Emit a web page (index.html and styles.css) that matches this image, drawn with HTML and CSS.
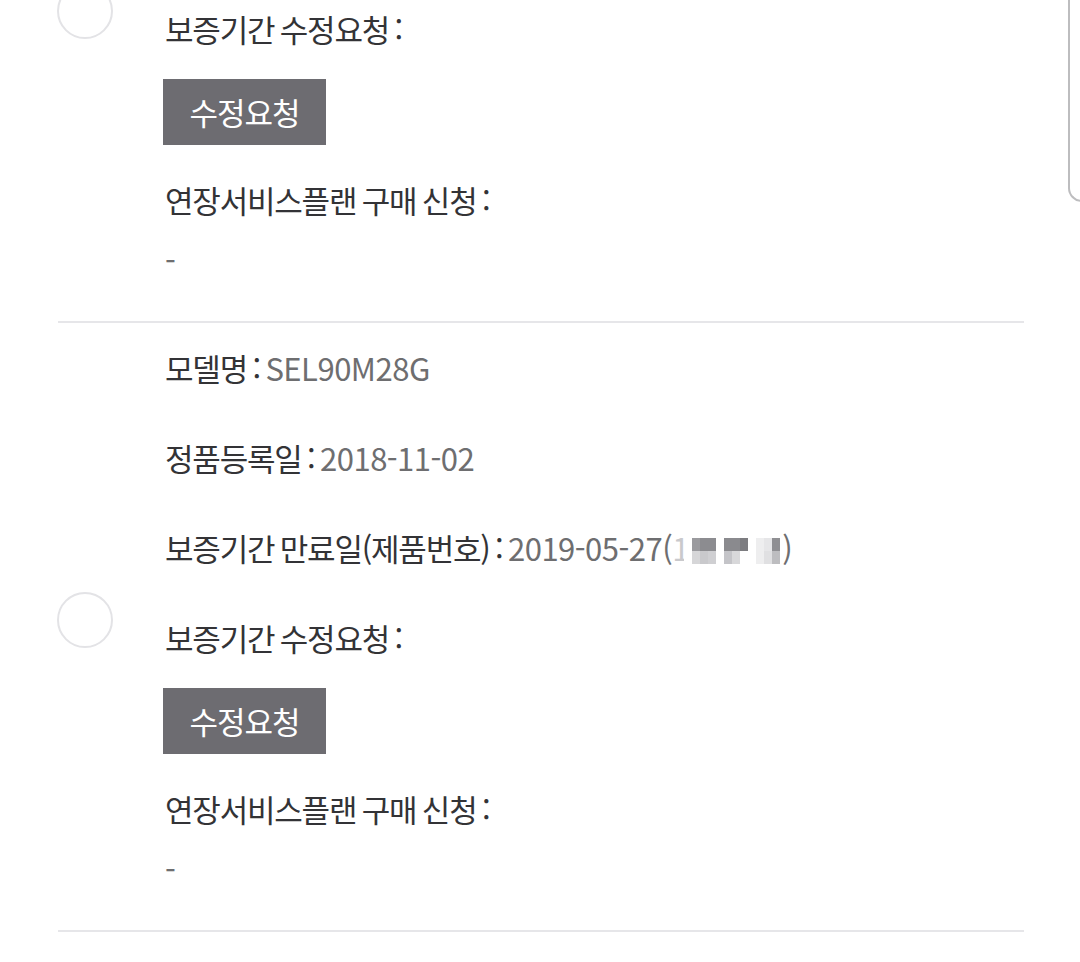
FILE: index.html
```html
<!DOCTYPE html>
<html lang="ko">
<head>
<meta charset="utf-8">
<title>정품등록 목록</title>
<link rel="stylesheet" href="styles.css">
</head>
<body>
<div class="page">
  <ul class="list">
    <li class="item">
      <span class="radio"></span>
      <div class="fields">
        <p class="row"><span class="label">모델명 : </span><span class="value">SEL90M28G</span></p>
        <p class="row"><span class="label">정품등록일 : </span><span class="value">2018-11-02</span></p>
        <p class="row"><span class="label">보증기간 만료일(제품번호) : </span><span class="value">2019-05-27(1)</span></p>
        <p class="row"><span class="label">보증기간 수정요청 :</span></p>
        <div class="btn-row"><button class="btn" type="button">수정요청</button></div>
        <p class="row after-btn"><span class="label">연장서비스플랜 구매 신청 :</span></p>
        <p class="row dash"><span class="value">-</span></p>
      </div>
    </li>
    <li class="item">
      <span class="radio"></span>
      <div class="fields">
        <p class="row"><span class="label">모델명 : </span><span class="value">SEL90M28G</span></p>
        <p class="row"><span class="label">정품등록일 : </span><span class="value">2018-11-02</span></p>
        <p class="row"><span class="label">보증기간 만료일(제품번호) : </span><span class="value">2019-05-27(<span class="faint">1</span><span class="mosaic"><i></i><i class="a"></i><i class="b"></i><i class="c"></i><i></i><i class="d"></i><i class="e"></i><i class="f"></i><i></i><i class="g"></i><i class="h"></i><i class="k"></i></span>)</span></p>
        <p class="row"><span class="label">보증기간 수정요청 :</span></p>
        <div class="btn-row"><button class="btn" type="button">수정요청</button></div>
        <p class="row after-btn"><span class="label">연장서비스플랜 구매 신청 :</span></p>
        <p class="row dash"><span class="value">-</span></p>
      </div>
    </li>
  </ul>
  <div class="scroll-thumb"></div>
</div>
</body>
</html>
```

FILE: styles.css
```css
html, body {
  margin: 0;
  padding: 0;
  background: #ffffff;
}

body {
  font-family: "Noto Sans CJK KR", "Noto Sans", sans-serif;
  overflow: hidden;
}

.page {
  position: relative;
  width: 1080px;
  height: 962px;
  overflow: hidden;
}

.list {
  list-style: none;
  margin: -286px 0 0 58px;
  padding: 0;
  width: 966px;
}

.item {
  display: grid;
  grid-template-columns: 107px 1fr;
  align-items: center;
  padding: 25px 0 41px;
  border-bottom: 2px solid #e6e6e9;
}

.radio {
  width: 56px;
  height: 56px;
  box-sizing: border-box;
  border: 2px solid #e3e3e6;
  border-radius: 50%;
  margin-left: -1px;
  margin-top: 3px;
}

.fields {
  display: flex;
  flex-direction: column;
  align-items: flex-start;
}

.row {
  margin: 50px 0 0;
  height: 40px;
  line-height: 40px;
  font-size: 31px;
  white-space: nowrap;
}

.row:first-child {
  margin-top: 0;
}

.label {
  color: #333336;
  letter-spacing: -1.2px;
  word-spacing: -2px;
}

.value {
  color: #6e6e70;
  letter-spacing: -0.5px;
}

.btn-row {
  margin-top: 30px;
  margin-left: -2px;
}

.btn {
  display: block;
  width: 163px;
  height: 66px;
  margin: 0;
  padding: 0;
  border: 0;
  border-radius: 0;
  background: #6d6c71;
  color: #ffffff;
  font-family: "Noto Sans CJK KR", "Noto Sans", sans-serif;
  font-size: 31px;
  letter-spacing: -1px;
  line-height: 66px;
}

.row.after-btn {
  margin-top: 35px;
}

.row.dash {
  margin-top: 20px;
}

.faint {
  color: #c9c9cc;
  display: inline-block;
  width: 12px;
  overflow: hidden;
  vertical-align: top;
}

.mosaic {
  display: inline-grid;
  grid-template-columns: repeat(12, 8px);
  grid-template-rows: 13px 13px;
  grid-auto-flow: column;
  vertical-align: -3px;
  margin-right: 2px;
}

.mosaic i {
  grid-row: span 2;
  display: block;
  background: transparent;
}

.mosaic i.a { background: linear-gradient(#9a9a9e 50%, #d6d6d8 50%); }
.mosaic i.b { background: linear-gradient(#8c8c90 50%, #c9c9cc 50%); }
.mosaic i.c { background: linear-gradient(#8c8c90 50%, #cfcfd2 50%); }
.mosaic i.d { background: linear-gradient(#8a8a8e 50%, #c4c4c8 50%); }
.mosaic i.e { background: linear-gradient(#8a8a8e 50%, #d8d8da 50%); }
.mosaic i.f { background: linear-gradient(#7c7c80 50%, #ffffff 50%); }
.mosaic i.g { background: linear-gradient(#eeeeef 50%, #eeeeef 50%); }
.mosaic i.h { background: linear-gradient(#e6e6e8 50%, #e0e0e2 50%); }
.mosaic i.k { background: linear-gradient(#8f8f93 50%, #bdbdc0 50%); }

.scroll-thumb {
  position: absolute;
  top: -20px;
  right: -6px;
  width: 16px;
  height: 220px;
  border-left: 2px solid #bdbdbf;
  border-bottom: 2px solid #bdbdbf;
  border-bottom-left-radius: 14px;
}
```
